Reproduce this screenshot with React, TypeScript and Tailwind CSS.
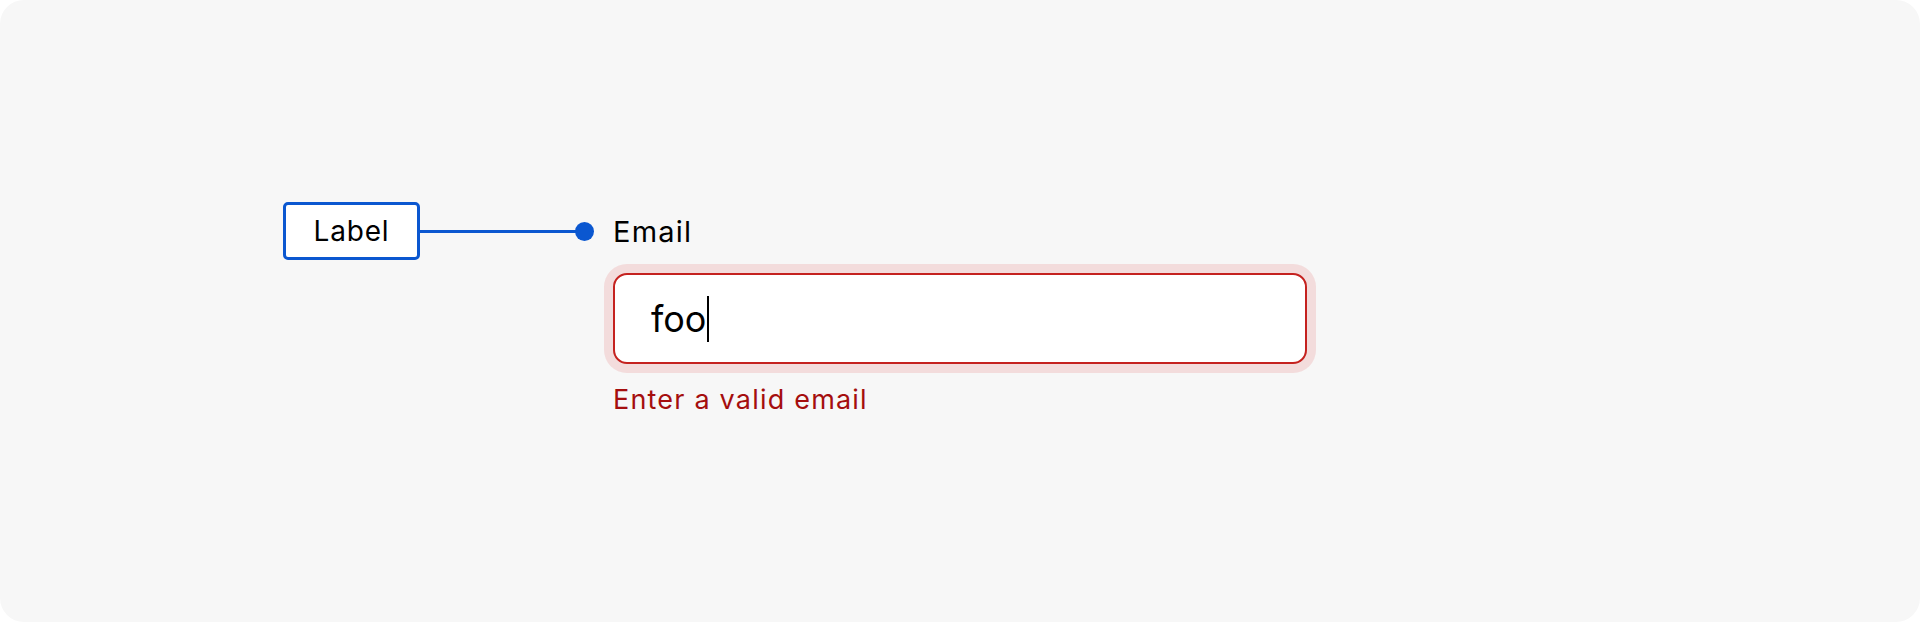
import React from "react";

export default function App() {
  const font = { fontFamily: "Inter, 'Noto Sans', sans-serif" };
  return (
    <div className="w-[1920px] h-[622px] bg-white" style={font}>
      <div className="h-full w-full rounded-[24px] bg-[#f7f7f7] pt-[202px] pl-[283px]">
        <div className="flex items-start">
          <div className="flex items-center h-[58px]">
            <div className="w-[137px] h-[58px] border-[3px] border-[#0b57d0] rounded-[5px] bg-white flex items-center justify-center text-[28px] tracking-[0.8px] text-black leading-none">
              Label
            </div>
            <div className="w-[157px] h-[3px] bg-[#0b57d0]" />
            <div className="w-[19px] h-[19px] rounded-full bg-[#0b57d0] -ml-[2px]" />
          </div>
          <div className="ml-[19px] flex flex-col">
            <div className="h-[58px] flex items-center text-[29px] tracking-[1.2px] text-black leading-none">Email</div>
            <div className="mt-[13px] w-[694px] h-[91px] rounded-[14px] border-[2.5px] border-[#c5221f] bg-white shadow-[0_0_0_9px_#f3dcdc] flex items-center pl-[36px]">
              <span className="text-[36px] text-black leading-none">foo</span>
              <span className="ml-[1px] w-[2px] h-[46px] bg-black" />
            </div>
            <div className="mt-[22px] text-[27px] tracking-[1.2px] text-[#a50e0e] leading-none">Enter a valid email</div>
          </div>
        </div>
      </div>
    </div>
  );
}
